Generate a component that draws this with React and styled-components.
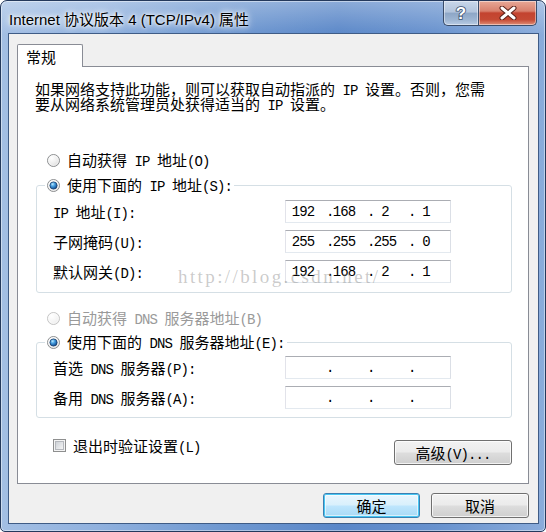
import React, { useId } from 'react';
import styled, { createGlobalStyle } from 'styled-components';

const GlobalStyle = createGlobalStyle`
  html, body { margin: 0; padding: 0; background: #ffffff; }
  body {
    font-family: "Noto Sans CJK SC", "Noto Sans", sans-serif;
    font-size: 15px;
    color: #000;
  }
  * { box-sizing: border-box; }
`;

const Lat = styled.span`
  font-family: "Liberation Mono", "DejaVu Sans Mono", monospace;
  font-size: 14px;
  letter-spacing: -0.9px;
  line-height: 0;
`;

const isAscii = (s) => /^[\x20-\x7e]+$/.test(s);
const Mix = ({ text }) =>
  text
    .split(/([\x20-\x7e]+)/)
    .filter(Boolean)
    .map((p, i) =>
      isAscii(p) ? <Lat key={i}>{p}</Lat> : <React.Fragment key={i}>{p}</React.Fragment>
    );

const Window = styled.div`
  position: relative;
  width: 546px;
  height: 532px;
  border: 1px solid #24395c;
  border-radius: 7px 7px 5px 5px;
  background:
    linear-gradient(to bottom, rgba(255, 255, 255, 0.3), rgba(255, 255, 255, 0) 34px),
    linear-gradient(to right, #a3bfe4 0%, #90b1de 18%, #7099d1 40%, #5a87c8 62%, #6892ce 80%, #8aacdb 100%);
  box-shadow: inset 0 0 0 1px rgba(255, 255, 255, 0.45);
  display: flex;
  flex-direction: column;
  overflow: hidden;
`;

const TitleBar = styled.div`
  height: 32px;
  flex: none;
  display: flex;
  align-items: flex-start;
  justify-content: space-between;
  padding: 0 8px 0 8px;
`;

const Title = styled.div`
  margin-top: 10px;
  line-height: 18px;
  font-family: "Liberation Sans", "Noto Sans CJK SC", sans-serif;
  font-size: 15px;
  color: #000;
  text-shadow: 0 0 6px #fff, 0 0 10px rgba(255, 255, 255, 0.9), 0 0 3px #fff;
  white-space: nowrap;
`;

const CaptionButtons = styled.div`
  display: flex;
  height: 25px;
`;

const CapButton = styled.div`
  width: ${(p) => p.$w}px;
  height: 25px;
  display: flex;
  align-items: center;
  justify-content: center;
  border: 1px solid #3a4c69;
  border-top: none;
  box-shadow: inset 0 0 0 1px rgba(255, 255, 255, 0.45);
  background: ${(p) =>
    p.$close
      ? 'linear-gradient(to bottom, #e8a897 0%, #d8806d 42%, #c3432f 50%, #c54a34 78%, #df8f78 100%)'
      : 'linear-gradient(to bottom, #c9d7ea 0%, #b2c4dc 45%, #8ea7c7 52%, #9fb6d3 80%, #b9cce4 100%)'};
  border-radius: ${(p) => (p.$close ? '0 0 5px 0' : '0 0 0 5px')};
  ${(p) => (p.$close ? '' : 'border-right: none;')}
`;

const Client = styled.div`
  flex: 1;
  min-height: 0;
  margin: 0 6px 7px 7px;
  background: #f0f0f0;
  border: 1px solid #3f5c86;
  display: flex;
  flex-direction: column;
  padding: 10px 9px 5px 8px;
`;

const TabStrip = styled.div`
  display: flex;
  height: 22px;
  flex: none;
`;

const Tab = styled.div`
  position: relative;
  z-index: 1;
  width: 66px;
  height: 23px;
  margin-bottom: -1px;
  background: #fff;
  border: 1px solid #898c95;
  border-bottom: none;
  border-radius: 2px 2px 0 0;
  padding: 2px 0 0 8px;
  line-height: 20px;
`;

const Panel = styled.div`
  position: relative;
  flex: 1;
  min-height: 0;
  background: #fff;
  border: 1px solid #898c95;
  padding: 14px 16px 0 17px;
  display: flex;
  flex-direction: column;
`;

const Desc = styled.p`
  margin: 0;
  line-height: 15px;
  white-space: nowrap;
`;

const RadioRow = styled.div`
  display: flex;
  align-items: center;
  gap: 7px;
  height: 16px;
  line-height: 16px;
  margin-top: ${(p) => p.$mt}px;
  margin-left: ${(p) => p.$ml || 0}px;
  color: ${(p) => (p.$disabled ? '#9a9a9a' : '#000')};
  white-space: nowrap;
`;

const Group = styled.fieldset`
  margin: ${(p) => p.$mt}px 0 0 1px;
  min-width: 0;
  border: 1px solid #d5dfe5;
  border-radius: 3px;
  padding: ${(p) => p.$pt}px 0 ${(p) => p.$pb}px 8px;
  display: flex;
  flex-direction: column;
  gap: 7px;
`;

const Legend = styled.legend`
  padding: 0 2px;
  margin: 0;
  height: 16px;
`;

const FieldRow = styled.div`
  display: flex;
  align-items: center;
  padding-left: 8px;
  height: 23px;
  line-height: 16px;
`;

const FieldLabel = styled.span`
  width: 232px;
  flex: none;
  white-space: nowrap;
`;

const IpBox = styled.div`
  width: 166px;
  height: 23px;
  border: 1px solid;
  border-color: #abadb3 #dbdfe6 #e3e9ef #e2e3ea;
  background: #fff;
  display: flex;
  align-items: center;
  padding-left: 2px;
`;

const Octet = styled(Lat)`
  width: 30px;
  line-height: 16px;
  text-align: center;
  flex: none;
`;

const Dot = styled(Lat)`
  width: 11px;
  line-height: 16px;
  padding-left: 8px;
  flex: none;
`;

const BottomRow = styled.div`
  display: flex;
  justify-content: space-between;
  align-items: flex-start;
  margin: 21px 0 0 18px;
`;

const CheckLabel = styled.label`
  display: flex;
  align-items: center;
  gap: 7px;
  height: 13px;
  line-height: 16px;
  white-space: nowrap;
`;

const Button = styled.button`
  width: ${(p) => p.$w}px;
  height: 25px;
  margin-top: ${(p) => p.$mt || 0}px;
  padding: 0;
  font-family: "Noto Sans CJK SC", sans-serif;
  font-size: 15px;
  line-height: 16px;
  color: #000;
  border-radius: 3px;
  border: 1px solid ${(p) => (p.$default ? '#3c7fb1' : '#707070')};
  box-shadow: ${(p) =>
    p.$default
      ? 'inset 0 0 0 1px #48c7f3, inset 0 0 0 2px rgba(255,255,255,0.55)'
      : 'inset 0 0 0 1px rgba(255,255,255,0.75)'};
  background: ${(p) =>
    p.$default
      ? 'linear-gradient(to bottom, #eaf6fd 0%, #d9f0fc 48%, #bee6fd 52%, #a7d9f5 100%)'
      : 'linear-gradient(to bottom, #f2f2f2 0%, #ebebeb 48%, #dddddd 52%, #cfcfcf 100%)'};
  white-space: nowrap;
`;

const Footer = styled.div`
  display: flex;
  justify-content: flex-end;
  gap: 11px;
  margin-top: 9px;
  height: 25px;
  flex: none;
`;

const Watermark = styled.div`
  position: absolute;
  left: 160px;
  top: 200px;
  font-family: "Liberation Serif", serif;
  font-size: 19px;
  line-height: 19px;
  letter-spacing: 2.4px;
  color: rgba(140, 140, 140, 0.45);
  pointer-events: none;
  white-space: nowrap;
`;

function Radio({ checked, disabled }) {
  const id = useId().replace(/:/g, '');
  const ring = disabled ? '#c4c4c4' : '#8d8f91';
  return (
    <svg width="13" height="13" viewBox="0 0 13 13" style={{ flex: 'none' }}>
      <defs>
        <radialGradient id={`f${id}`} cx="0.35" cy="0.3" r="0.8">
          <stop offset="0" stopColor="#ffffff" />
          <stop offset="0.6" stopColor={disabled ? '#f4f4f4' : '#ececec'} />
          <stop offset="1" stopColor={disabled ? '#e6e6e6' : '#d0d0d0'} />
        </radialGradient>
        <radialGradient id={`d${id}`} cx="0.38" cy="0.32" r="0.75">
          <stop offset="0" stopColor="#bfe8fd" />
          <stop offset="0.35" stopColor="#4ea6e4" />
          <stop offset="0.8" stopColor="#1a5ea6" />
          <stop offset="1" stopColor="#0c3468" />
        </radialGradient>
      </defs>
      <circle cx="6.5" cy="6.5" r="6" fill={`url(#f${id})`} stroke={ring} />
      <circle cx="6.5" cy="6.5" r="4.8" fill="none" stroke="#ffffff" strokeOpacity="0.6" />
      {checked && <circle cx="6.5" cy="6.5" r="3.6" fill={`url(#d${id})`} stroke="#173e6d" strokeWidth="0.8" />}
    </svg>
  );
}

function CheckBox() {
  const id = useId().replace(/:/g, '');
  return (
    <svg width="13" height="13" viewBox="0 0 13 13" style={{ flex: 'none' }}>
      <defs>
        <linearGradient id={`c${id}`} x1="0" y1="0" x2="1" y2="1">
          <stop offset="0" stopColor="#cbcfd5" />
          <stop offset="1" stopColor="#f7f7f7" />
        </linearGradient>
      </defs>
      <rect x="0.5" y="0.5" width="12" height="12" fill="#f4f4f4" stroke="#8e8f8f" />
      <rect x="2.5" y="2.5" width="8" height="8" fill={`url(#c${id})`} stroke="#b5b8bd" />
    </svg>
  );
}

function IpField({ parts }) {
  return (
    <IpBox>
      {parts.map((p, i) => (
        <React.Fragment key={i}>
          <Octet>{p}</Octet>
          {i < 3 && <Dot>.</Dot>}
        </React.Fragment>
      ))}
    </IpBox>
  );
}

export default function App() {
  return (
    <>
      <GlobalStyle />
      <Window>
        <TitleBar>
          <Title>Internet 协议版本 4 (TCP/IPv4) 属性</Title>
          <CaptionButtons>
            <CapButton $w={35}>
              <svg width="14" height="18" viewBox="0 0 14 18">
                <text
                  x="7"
                  y="15"
                  textAnchor="middle"
                  fontFamily="Liberation Sans, sans-serif"
                  fontWeight="bold"
                  fontSize="17"
                  fill="#ffffff"
                  stroke="#3b4f6e"
                  strokeWidth="1.6"
                  paintOrder="stroke"
                >
                  ?
                </text>
              </svg>
            </CapButton>
            <CapButton $w={59} $close>
              <svg width="18" height="14" viewBox="0 0 18 14">
                <path d="M3 2 L15 12 M15 2 L3 12" stroke="#5a2119" strokeWidth="5" strokeLinecap="round" fill="none" />
                <path d="M3 2 L15 12 M15 2 L3 12" stroke="#ffffff" strokeWidth="3" strokeLinecap="round" fill="none" />
              </svg>
            </CapButton>
          </CaptionButtons>
        </TitleBar>
        <Client>
          <TabStrip>
            <Tab>常规</Tab>
          </TabStrip>
          <Panel>
            <Desc>
              <Mix text="如果网络支持此功能，则可以获取自动指派的 IP 设置。否则，您需" />
              <br />
              <Mix text="要从网络系统管理员处获得适当的 IP 设置。" />
            </Desc>
            <RadioRow $mt={41} $ml={12}>
              <Radio />
              <span><Mix text="自动获得 IP 地址(O)" /></span>
            </RadioRow>
            <Group $mt={9} $pt={7} $pb={9}>
              <Legend>
                <RadioRow $mt={0}>
                  <Radio checked />
                  <span><Mix text="使用下面的 IP 地址(S):" /></span>
                </RadioRow>
              </Legend>
              <FieldRow>
                <FieldLabel><Mix text="IP 地址(I):" /></FieldLabel>
                <IpField parts={['192', '168', '2', '1']} />
              </FieldRow>
              <FieldRow>
                <FieldLabel><Mix text="子网掩码(U):" /></FieldLabel>
                <IpField parts={['255', '255', '255', '0']} />
              </FieldRow>
              <FieldRow>
                <FieldLabel><Mix text="默认网关(D):" /></FieldLabel>
                <IpField parts={['192', '168', '2', '1']} />
              </FieldRow>
            </Group>
            <RadioRow $mt={17} $ml={12} $disabled>
              <Radio disabled />
              <span><Mix text="自动获得 DNS 服务器地址(B)" /></span>
            </RadioRow>
            <Group $mt={8} $pt={6} $pb={8}>
              <Legend>
                <RadioRow $mt={0}>
                  <Radio checked />
                  <span><Mix text="使用下面的 DNS 服务器地址(E):" /></span>
                </RadioRow>
              </Legend>
              <FieldRow>
                <FieldLabel><Mix text="首选 DNS 服务器(P):" /></FieldLabel>
                <IpField parts={['', '', '', '']} />
              </FieldRow>
              <FieldRow>
                <FieldLabel><Mix text="备用 DNS 服务器(A):" /></FieldLabel>
                <IpField parts={['', '', '', '']} />
              </FieldRow>
            </Group>
            <BottomRow>
              <CheckLabel>
                <CheckBox />
                <span><Mix text="退出时验证设置(L)" /></span>
              </CheckLabel>
              <Button $w={118} $mt={1}><Mix text="高级(V)..." /></Button>
            </BottomRow>
            <Watermark>http://blog.csdn.net/</Watermark>
          </Panel>
          <Footer>
            <Button $w={97} $default>确定</Button>
            <Button $w={98}>取消</Button>
          </Footer>
        </Client>
      </Window>
    </>
  );
}
